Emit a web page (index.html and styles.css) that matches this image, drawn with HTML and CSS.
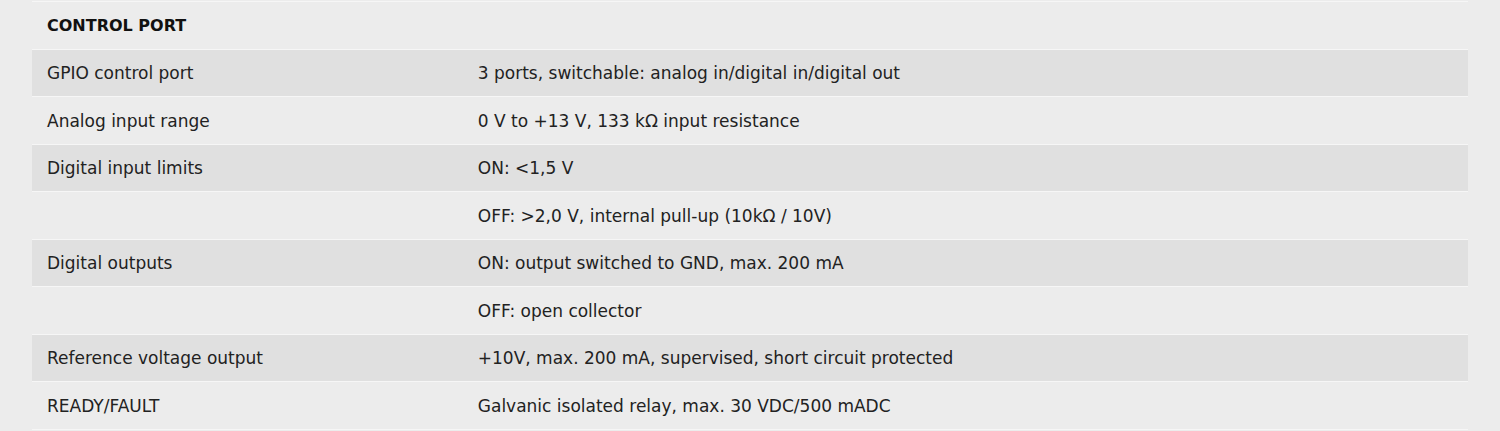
FILE: index.html
```html
<!DOCTYPE html>
<html lang="en">
<head>
<meta charset="utf-8">
<title>Control port</title>
<link rel="stylesheet" href="styles.css">
</head>
<body>
<div class="page">
  <table class="specs">
    <tr class="head"><th colspan="2">CONTROL PORT</th></tr>
    <tr class="alt"><td class="label">GPIO control port</td><td>3 ports, switchable: analog in/digital in/digital out</td></tr>
    <tr><td class="label">Analog input range</td><td>0 V to +13 V, 133 kΩ input resistance</td></tr>
    <tr class="alt"><td class="label">Digital input limits</td><td>ON: &lt;1,5 V</td></tr>
    <tr><td class="label"></td><td>OFF: &gt;2,0 V, internal pull-up (10kΩ / 10V)</td></tr>
    <tr class="alt"><td class="label">Digital outputs</td><td>ON: output switched to GND, max. 200 mA</td></tr>
    <tr><td class="label"></td><td>OFF: open collector</td></tr>
    <tr class="alt"><td class="label">Reference voltage output</td><td>+10V, max. 200 mA, supervised, short circuit protected</td></tr>
    <tr><td class="label">READY/FAULT</td><td>Galvanic isolated relay, max. 30 VDC/500 mADC</td></tr>
  </table>
</div>
</body>
</html>
```
FILE: styles.css
```css
html, body {
  margin: 0;
  background: #ececec;
}
.page {
  padding: 1px 32px 0;
}
.specs {
  width: 100%;
  border-collapse: collapse;
  font-family: "DejaVu Sans", "Noto Sans", sans-serif;
  font-size: 17px;
  color: #222;
}
.specs tr {
  border-top: 1px solid #f6f6f6;
  border-bottom: 1px solid #f6f6f6;
  height: 47.5px;
}
.specs th {
  text-align: left;
  font-size: 16px;
  font-weight: 700;
  padding: 0 15px;
  color: #111;
}
.specs td {
  padding: 1px 15px 0;
  vertical-align: middle;
}
.specs td.label {
  width: 30%;
  box-sizing: border-box;
}
.specs tr.alt {
  background: #e0e0e0;
}
```
